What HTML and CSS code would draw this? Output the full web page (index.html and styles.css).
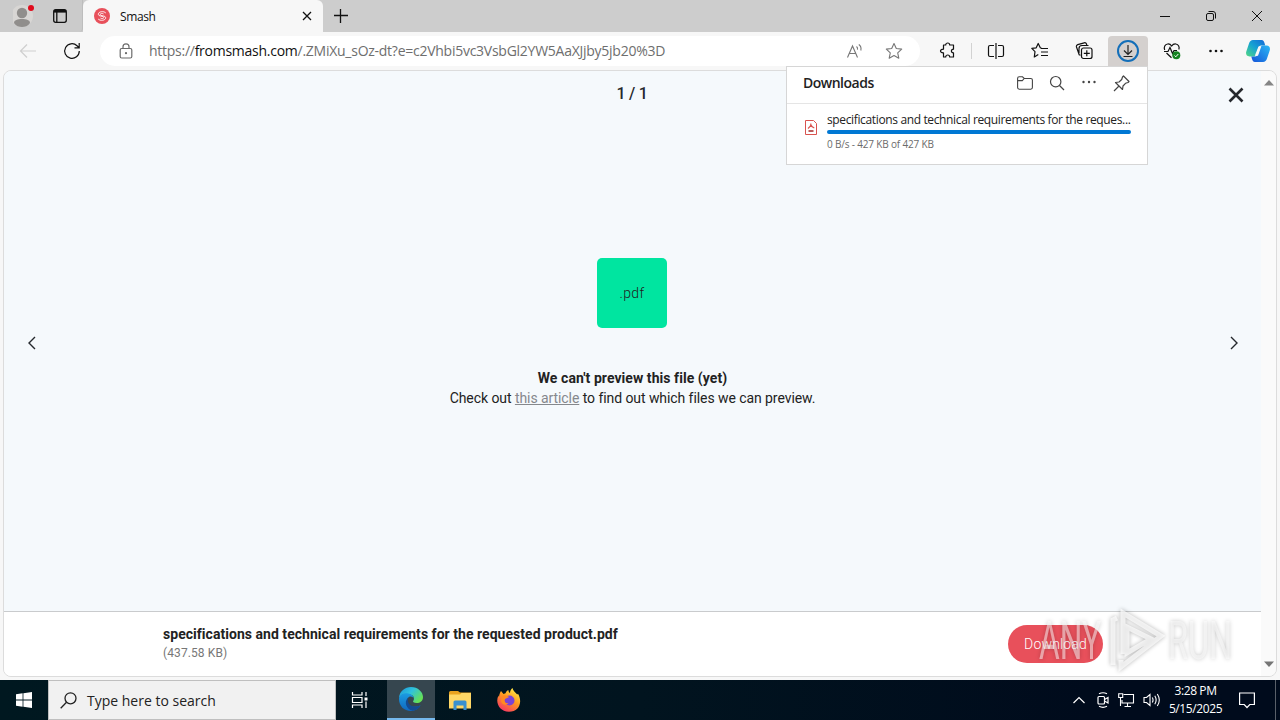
FILE: index.html
```html
<!DOCTYPE html>
<html lang="en">
<head>
  <meta charset="UTF-8">
  <title>Smash</title>
  <link rel="stylesheet" href="styles.css">
</head>
<body>
  <div class="desktop">

    <!-- Tabs -->
    <div class="tab-bar">
      <div class="tab-tools">
        <svg class="profile" width="22" height="26" viewBox="0 0 22 26">
          <circle cx="9" cy="13" r="11" fill="#d8d6d4"/>
          <circle cx="9" cy="10" r="5.2" fill="#908e8c"/>
          <path d="M1 20c0-3 3.500-4 8-4s8 1 8 4c-2 3-5 4-8 4s-6-1-8-4z" fill="#908e8c"/>
          <circle cx="18" cy="5" r="3" fill="#e00b1c"/>
        </svg>
        <svg class="workspaces" width="16" height="16" viewBox="0 0 16 16" fill="none" stroke="#111" stroke-width="1.300">
          <rect x="1.700" y="1.700" width="12.600" height="12.600" rx="2"/>
          <path d="M2 3.300h12" stroke-width="2.600"/>
          <path d="M4.800 4v10"/>
        </svg>
      </div>
      <div class="tab">
        <svg width="16" height="16" viewBox="0 0 16 16">
          <circle cx="8" cy="8" r="8" fill="#e8505b"/>
          <path d="M11.800 5C10 2.800 4.300 3.300 4.300 6.300c0 2.500 5.400 1.200 5.400 3.200 0 1.300-2 1.400-3.200.6M4.200 11c1.800 2.200 7.500 1.700 7.500-1.300 0-2.500-5.400-1.200-5.400-3.200 0-1.300 2-1.400 3.200-.6" fill="none" stroke="#fff" stroke-width=".9"/>
        </svg>
        <span class="tab-title">Smash</span>
        <svg width="10" height="10" viewBox="0 0 10 10" stroke="#111" stroke-width="1.300"><path d="M1 1l8 8M9 1L1 9"/></svg>
      </div>
      <svg class="new-tab" width="14" height="14" viewBox="0 0 14 14" stroke="#111" stroke-width="1.300"><path d="M6.500 0v14M0 6.500h14"/></svg>
      <div class="window-controls">
        <svg width="12" height="12" viewBox="0 0 12 12" fill="none" stroke="#111"><path d="M1 6.500h10"/></svg>
        <svg width="12" height="12" viewBox="0 0 12 12" fill="none" stroke="#111"><rect x="1.500" y="3.500" width="7" height="7" rx="1.500"/><path d="M3.500 1.500H8a2.500 2.500 0 0 1 2.500 2.500v4.500"/></svg>
        <svg width="12" height="12" viewBox="0 0 12 12" fill="none" stroke="#111"><path d="M1 1l10 10M11 1L1 11"/></svg>
      </div>
    </div>

    <!-- Toolbar -->
    <div class="toolbar">
      <div class="nav-buttons">
        <svg width="18" height="16" viewBox="0 0 18 16" fill="none" stroke="#cfcfcf" stroke-width="1.200"><path d="M17 8H2M8 1.500L1.500 8 8 14.500"/></svg>
        <svg width="18" height="18" viewBox="0 0 18 18" fill="none" stroke="#111" stroke-width="1.200"><path d="M16.300 9A7.300 7.300 0 1 1 14 3.700L16 5.500M16.200 1v4.800h-4.700"/></svg>
      </div>
      <div class="address">
        <svg width="14" height="16" viewBox="0 0 14 16" fill="none" stroke="#6b6b6b" stroke-width="1.200"><rect x="1.200" y="5.500" width="11.600" height="9.500" rx="1.500"/><path d="M4 5.500V3.800a3 3 0 0 1 6 0v1.700"/><circle cx="7" cy="10.200" r=".5" fill="#6b6b6b"/></svg>
        <span class="url">https://<b>fromsmash.com</b>/.ZMiXu_sOz-dt?e=c2Vhbi5vc3VsbGl2YW5AaXJjby5jb20%3D</span>
        <svg width="18" height="16" viewBox="0 0 18 16" fill="none" stroke="#777" stroke-width="1.100"><path d="M2.500 14.500L7.500 3l5 11.500M4.300 10.500h6.500M11.500 3.500c1 .8 1.200 2 1 3.200M13.800 1.500c2 1.500 2.500 4 2 6"/></svg>
        <svg class="star" width="18" height="18" viewBox="0 0 18 18" fill="none" stroke="#777" stroke-width="1.100" stroke-linejoin="round"><path d="M9 1.500l2.300 5 5.400.6-4 3.700 1.100 5.400L9 13.500l-4.800 2.700 1.100-5.400-4-3.700 5.400-.6z"/></svg>
      </div>
      <div class="actions">
        <span class="tool"><svg width="18" height="18" viewBox="0 0 18 18" fill="none" stroke="#111" stroke-width="1.200" stroke-linejoin="round"><path d="M4.500 3h2.200a2 2 0 0 1 4 0h3.800v4.200c-2.800-.2-2.800 3.800 0 3.600V15h-3.800a2 2 0 0 0-4 0H4.500v-4.200c-4 .3-4-3.900 0-3.600z"/></svg></span>
        <span class="divider"></span>
        <span class="tool"><svg width="18" height="18" viewBox="0 0 18 18" fill="none" stroke="#111" stroke-width="1.200"><path d="M9 1v16M7 3.500H3A1.500 1.500 0 0 0 1.500 5v8A1.500 1.500 0 0 0 3 14.500h4M11 3.500h4A1.500 1.500 0 0 1 16.500 5v8a1.500 1.500 0 0 1-1.500 1.500h-4"/></svg></span>
        <span class="tool"><svg width="18" height="18" viewBox="0 0 18 18" fill="none" stroke="#111" stroke-width="1.200" stroke-linejoin="round"><path d="M10.500 6L9.300 5.800 7.200 1.500 5.200 5.800l-4.400.6 3.200 3.200L3.300 15l4-2.500M10 6.500h7M10 10h7M10 13.500h7"/></svg></span>
        <span class="tool"><svg width="18" height="18" viewBox="0 0 18 18" fill="none" stroke="#111" stroke-width="1.200"><path d="M5.500 13.200l-1.300-.4L1.500 5A2 2 0 0 1 2.700 2.600l6.500-1.800A2 2 0 0 1 11.500 2l.3 1M4 11V6.500A3 3 0 0 1 7 3.500h6.500"/><rect x="6.500" y="6" width="10.500" height="10.500" rx="2" fill="#f7f7f7"/><path d="M11.800 8.300v6M8.800 11.300h6"/></svg></span>
        <span class="tool active"><svg width="22" height="22" viewBox="0 0 22 22" fill="none"><circle cx="11" cy="11" r="10" stroke="#146fb9" stroke-width="2"/><path d="M11 5v9M7 10.500l4 4 4-4M6.500 16.500h9" stroke="#222" stroke-width="1.200"/></svg></span>
        <span class="tool"><svg width="18" height="18" viewBox="0 0 18 18" fill="none" stroke="#111" stroke-width="1.200"><path d="M1.700 8C.5 5 2 2.300 4.700 2 6.500 1.800 8 3 8.700 4 9.500 2.800 11 1.800 12.800 2c2.700.3 4 3 3 5.500M1 9.500h4l2-4 2.500 6 1.500-3h3M3.500 11l5 4.700"/><circle cx="13.300" cy="13.300" r="4" fill="#168321" stroke="none"/><path d="M11.500 13.500l1.300 1.300 2.500-2.800" stroke="#fff" stroke-width="1"/></svg></span>
        <span class="tool"><svg width="16" height="4" viewBox="0 0 16 4" fill="#111"><circle cx="2.500" cy="2" r="1.300"/><circle cx="8" cy="2" r="1.300"/><circle cx="13.500" cy="2" r="1.300"/></svg></span>
        <span class="tool copilot"><svg width="24" height="22" viewBox="0 0 24 22">
          <defs>
            <linearGradient id="copilotLeft" x1="1" y1="0" x2="0" y2="1"><stop offset="0" stop-color="#1468d8"/><stop offset=".5" stop-color="#16a3d2"/><stop offset="1" stop-color="#52d883"/></linearGradient>
            <linearGradient id="copilotRight" x1="1" y1="0" x2="0" y2="1"><stop offset="0" stop-color="#2ab8f5"/><stop offset="1" stop-color="#1554d8"/></linearGradient>
          </defs>
          <path d="M7 0h8.500c2 0 2.500 1.500 3 3l.7 2.500h-4c-1.700 0-2.500 1-3 2.500l-2 6C9.700 16 9 16.500 7.500 16.500H3.500C.5 16.500-.5 14 .3 11.500L3 3.500C3.700 1.300 5 0 7 0z" fill="url(#copilotLeft)"/>
          <path d="M17 22H9c-2 0-2.500-1.500-3-3l-.7-2.500H9c1.700 0 2.500-1 3-2.500l2-6c.5-1.500 1.500-2.500 3-2.500h3.500c3 0 4 2.500 3.200 5L21 18.500c-.7 2.200-2 3.500-4 3.500z" fill="url(#copilotRight)"/>
          <path d="M12.500 6.500h2.800L12 15.800H8.800z" fill="#f7f7f7"/>
        </svg></span>
      </div>
    </div>

    <!-- Page -->
    <div class="page">
      <div class="viewer">
        <div class="preview">
          <div class="preview-top">
            <span class="counter">1 / 1</span>
            <svg class="close" width="16" height="16" viewBox="0 0 16 16" stroke="#25282d" stroke-width="2.600"><path d="M1.500 1.500l13 13M14.500 1.500l-13 13"/></svg>
          </div>
          <div class="preview-body">
            <svg width="10" height="14" viewBox="0 0 10 14" fill="none" stroke="#25282d" stroke-width="1.400"><path d="M8 1L2 7l6 6"/></svg>
            <div class="message">
              <div class="file-type">.pdf</div>
              <p class="message-title">We can't preview this file (yet)</p>
              <p class="message-text">Check out <a href="#">this article</a> to find out which files we can preview.</p>
            </div>
            <svg width="10" height="14" viewBox="0 0 10 14" fill="none" stroke="#25282d" stroke-width="1.400"><path d="M2 1l6 6-6 6"/></svg>
          </div>
        </div>
        <div class="file-bar">
          <div>
            <div class="file-name">specifications and technical requirements for the requested product.pdf</div>
            <div class="file-size">(437.58 KB)</div>
          </div>
          <button class="download-btn">Download</button>
        </div>
      </div>
      <div class="scrollbar">
        <svg width="10" height="6" viewBox="0 0 10 6"><path d="M0 5.500L5 0l5 5.500z" fill="#858585"/></svg>
        <svg width="10" height="6" viewBox="0 0 10 6"><path d="M0 .5L5 6l5-5.500z" fill="#757575"/></svg>
      </div>
    </div>

    <!-- Taskbar -->
    <div class="taskbar">
      <div class="start">
        <svg width="16" height="16" viewBox="0 0 16 16" fill="#fff"><path d="M0 2.200l6.600-.9v6.300H0zM7.400 1.200L16 0v7.600H7.400zM0 8.400h6.600v6.300L0 13.800zM7.400 8.400H16V16l-8.600-1.200z"/></svg>
      </div>
      <div class="search">
        <svg width="17" height="17" viewBox="0 0 17 17" fill="none" stroke="#222" stroke-width="1.300"><circle cx="10.500" cy="6.300" r="5.500"/><path d="M6.500 10.300L.7 16.200"/></svg>
        <span>Type here to search</span>
      </div>
      <div class="task task-view">
        <svg width="18" height="18" viewBox="0 0 18 18" fill="none" stroke="#fff" stroke-width="1.200"><path d="M1.500 1v3h9.500V1M1.500 17v-3h9.500v3M1.500 6.500H11v5H1.500zM15 1v4M15 10.500V17"/><path d="M13.500 6.500h3v3h-3z" fill="#fff" stroke="none"/></svg>
      </div>
      <div class="task open">
        <svg width="24" height="24" viewBox="0 0 24 24">
          <defs>
            <linearGradient id="edgeTop" x1="0" y1="0" x2="1" y2=".6"><stop offset="0" stop-color="#1b93d8"/><stop offset=".5" stop-color="#2fc2de"/><stop offset="1" stop-color="#66e155"/></linearGradient>
            <linearGradient id="edgeLow" x1="0" y1="0" x2="0" y2="1"><stop offset="0" stop-color="#1b9ce2"/><stop offset="1" stop-color="#1067be"/></linearGradient>
          </defs>
          <path d="M0 11C.5 4 6 0 12 0c7 0 12 5 12 10 0 4-3 6-6.300 6-3 0-4.200-1.200-3.500-2 1.600-2 1-6.500-4.200-6.500C5 6 1.500 8 0 11z" fill="url(#edgeTop)"/>
          <path d="M0 12C0 8 4 5.800 8 6.200c3.500.2 6.500 2.300 6.700 5.300-.5-1.200-1.700-2-3-2C9 9.500 8 12 8 14c0 5 6 7.500 13.500 4.500C19 22.500 15 24 12 24 5 24 0 19 0 12z" fill="url(#edgeLow)"/>
          <path d="M9 10.800c-4.500 4-1.500 11.700 4.500 13 3.500-.3 6.500-2.300 8-5.300C14 21.500 7.500 18 9 10.800z" fill="#144a91"/>
        </svg>
      </div>
      <div class="task">
        <svg width="22" height="20" viewBox="0 0 22 20"><path d="M0 2.500Q0 1 1.500 1H9l2 1.500h11V18H0z" fill="#e9a21f"/><path d="M0 4.500h11l1.500-1.500H22v15.500H0z" fill="#ffd766"/><path d="M4.500 12q0-1.500 1.500-1.500h10q1.500 0 1.500 1.500v8h-3v-4.500h-7V20h-3z" fill="#3990cf"/></svg>
      </div>
      <div class="task">
        <svg width="24" height="24" viewBox="0 0 24 24">
          <defs>
            <linearGradient id="fox" x1=".8" y1="0" x2=".2" y2="1"><stop offset="0" stop-color="#fff04a"/><stop offset=".45" stop-color="#ff9a1f"/><stop offset="1" stop-color="#f62f68"/></linearGradient>
          </defs>
          <path d="M4 3l2.500 3 2-.8C9 3.700 10 2.500 11.500 2c-.2 1.300.3 2.200 1.500 3C13 3 14 1 15.500 0c.3 2.800 3 4.200 4.700 6.500L21 5.700c5 8.500 1 18-9 18S-2 14 1.500 7.500L2 9c.2-2.500 1-4.500 2-6z" fill="url(#fox)"/>
          <circle cx="12.500" cy="12.500" r="5" fill="#7a43d6"/>
          <path d="M5 8c3-1.500 5 0 7 1-1.500 1.500-4.500 1-4.500 3.500 0 2 2 3 4 2.500-2 3-7 2-7.500-2z" fill="#ff8a20"/>
        </svg>
      </div>
      <div class="tray">
        <svg width="12" height="8" viewBox="0 0 12 8" fill="none" stroke="#fff" stroke-width="1.200"><path d="M.5 7L6 1.500 11.500 7"/></svg>
        <svg width="14" height="16" viewBox="0 0 14 16" fill="none" stroke="#fff" stroke-width="1.200"><rect x="2" y="4.500" width="6.500" height="7.500" rx="1"/><path d="M8.500 7.500L12 5.500v5.500L8.500 9M3 1.800Q7-.3 11 1.800M3 14.300Q7 16.300 11 14.300"/></svg>
        <svg width="17" height="16" viewBox="0 0 17 16" fill="none" stroke="#fff" stroke-width="1.100"><path d="M5.500 2.500h10v8.500H4V8M9.500 11v3M6.500 14.500h6.500M2.500 6v8"/><path d="M.7 1.700h4v3.800h-4z"/></svg>
        <svg width="18" height="16" viewBox="0 0 18 16" fill="none" stroke="#fff" stroke-width="1.100"><path d="M1 5.500h2.500l3.500-3v11l-3.500-3H1zM9.300 5.500q1.500 2.500 0 5M11.800 3.700q2.700 4.300 0 8.600M14.300 2q4 6 0 12"/></svg>
      </div>
      <div class="clock">
        <span>3:28 PM</span>
        <span>5/15/2025</span>
      </div>
      <svg class="notify" width="16" height="17" viewBox="0 0 16 17" fill="none" stroke="#fff" stroke-width="1.200"><path d="M.6 1h14.800v11.500h-4.600L8 15.500l-2.800-3H.6z"/></svg>
      <div class="show-desktop"></div>
    </div>

    <!-- Downloads popup -->
    <div class="downloads">
      <div class="downloads-head">
        <span class="downloads-title">Downloads</span>
        <svg width="16" height="14" viewBox="0 0 16 14" fill="none" stroke="#444" stroke-width="1.100"><path d="M.6 2.500Q.6.800 2.200.8h3.300L7.200 2.500h6.600q1.600 0 1.600 1.600v7.500q0 1.600-1.600 1.600H2.200Q.6 13.200.6 11.600zM.6 4.600h4.700l1.900-2.100"/></svg>
        <svg width="16" height="16" viewBox="0 0 16 16" fill="none" stroke="#444" stroke-width="1.200"><circle cx="6.700" cy="6.700" r="5.200"/><path d="M10.500 10.500l4.500 4.500"/></svg>
        <svg width="16" height="16" viewBox="0 0 16 16" fill="#444"><circle cx="2.500" cy="7" r="1.200"/><circle cx="8" cy="7" r="1.200"/><circle cx="13.500" cy="7" r="1.200"/></svg>
        <svg width="17" height="17" viewBox="0 0 17 17" fill="none" stroke="#444" stroke-width="1.200" stroke-linejoin="round"><path d="M10.500 1l5.500 5.500-1 1-2.500.8L10 11l-.5 3.500L2.500 7.500 6 7l2.700-2.500L9.500 2zM6 11L1 16"/></svg>
      </div>
      <div class="downloads-item">
        <svg width="12" height="15" viewBox="0 0 12 15" fill="none" stroke="#d9534f"><path d="M.5.500h8l3 3v11H.5z"/><path d="M5.800 3.500v3.500M3 8.500q2.300-2 3-3.500.8 2 3.300 3" stroke-width="1.200"/><path d="M3.500 11h5" stroke="#a33" stroke-width="1.600"/></svg>
        <div class="downloads-info">
          <div class="downloads-name">specifications and technical requirements for the reques...</div>
          <div class="progress"></div>
          <div class="downloads-status">0 B/s - 427 KB of 427 KB</div>
        </div>
      </div>
    </div>

    <svg class="watermark" width="220" height="72" viewBox="0 0 220 72">
      <text x="2" y="51" textLength="62" lengthAdjust="spacingAndGlyphs">ANY</text>
      <path class="mark" d="M76 57V12l4-2M86 46V5l38 23-40 31v-7M90 19l24 12-24 14z"/>
      <text x="131" y="51" textLength="64" lengthAdjust="spacingAndGlyphs">RUN</text>
    </svg>
  </div>
</body>
</html>
```

FILE: styles.css
```css
* {
  box-sizing: border-box;
}

body {
  margin: 0;
  font-family: "Open Sans", "Noto Sans", sans-serif;
  color: #222;
}

svg {
  display: block;
  flex-shrink: 0;
}

.desktop {
  position: relative;
  width: 1280px;
  height: 720px;
  display: flex;
  flex-direction: column;
  background: #f7f7f7;
  overflow: hidden;
}

/* Tabs */
.tab-bar {
  height: 32px;
  display: flex;
  align-items: center;
  background: #cdcdcd;
}

.tab-tools {
  width: 83px;
  height: 32px;
  display: flex;
  align-items: center;
  gap: 17px;
  padding-left: 13px;
  background: #cbcbcb;
  border-right: 1px solid #bdbdbd;
  border-radius: 0 0 4px 0;
}

.tab {
  width: 240px;
  height: 32px;
  display: flex;
  align-items: center;
  padding: 0 11px 0 11px;
  background: #f7f7f7;
  border-radius: 6px 6px 0 0;
}

.tab-title {
  flex: 1;
  margin-left: 10px;
  font-size: 12px;
  letter-spacing: -0.4px;
  color: #111;
}

.new-tab {
  margin-left: 11px;
}

.window-controls {
  display: flex;
  gap: 34px;
  margin-left: auto;
  padding-right: 17px;
}

/* Toolbar */
.toolbar {
  height: 38px;
  display: flex;
  padding-top: 4px;
}

.nav-buttons {
  width: 100px;
  height: 30px;
  display: flex;
  flex-shrink: 0;
  align-items: center;
  gap: 26px;
  padding-left: 19px;
}

.address {
  width: 820px;
  height: 30px;
  display: flex;
  flex-shrink: 0;
  align-items: center;
  padding: 0 17px 0 19px;
  background: #fff;
  border-radius: 15px;
}

.url {
  flex: 1;
  margin-left: 16px;
  padding-bottom: 1px;
  font-size: 14px;
  letter-spacing: -0.26px;
  color: #6e6e6e;
  white-space: nowrap;
}

.url b {
  font-weight: normal;
  color: #111;
}

.star {
  margin-left: 22px;
}

.actions {
  display: flex;
  flex-shrink: 0;
  align-items: center;
  height: 30px;
  padding-left: 8px;
}

.tool {
  width: 40px;
  height: 30px;
  margin-right: 4px;
  display: flex;
  align-items: center;
  justify-content: center;
}

.tool.active {
  background: #d4d0ce;
  border-radius: 4px 4px 0 0;
}

.tool.copilot {
  margin: 0;
  width: 36px;
}

.divider {
  width: 1px;
  height: 16px;
  margin: 0 4px 0 -1px;
  background: #d2d2d2;
}

/* Page */
.page {
  width: 1274px;
  height: 607px;
  margin-left: 3px;
  display: flex;
  border: 1px solid #dcdcdc;
  border-radius: 8px;
  overflow: hidden;
  font-family: Roboto, sans-serif;
}

.viewer {
  width: 1257px;
  display: flex;
  flex-direction: column;
}

.preview {
  height: 541px;
  display: flex;
  flex-direction: column;
  background: #f5f9fc;
  border-bottom: 1px solid #c9cbcd;
}

.preview-top {
  display: grid;
  grid-template-columns: 1fr auto 1fr;
  align-items: center;
  height: 48px;
  padding: 0 17px 0 16px;
}

.counter {
  grid-column: 2;
  padding-bottom: 3px;
  font-size: 16px;
  font-weight: 500;
  letter-spacing: -0.3px;
  color: #25282d;
}

.close {
  justify-self: end;
}

.preview-body {
  height: 448px;
  display: flex;
  justify-content: space-between;
  align-items: center;
  padding: 0 22px 0 23px;
}

.message {
  display: flex;
  flex-direction: column;
  align-items: center;
  padding: 0 1px 20px 0;
  font-size: 14px;
  line-height: 20px;
}

.file-type {
  width: 70px;
  height: 70px;
  margin: 0 1px 40px 0;
  border-radius: 5px;
  background: #00e5a0;
  text-align: center;
  line-height: 70px;
  font-weight: 300;
  letter-spacing: 0.3px;
}

.message p {
  margin: 0;
}

.message-title {
  font-weight: bold;
  letter-spacing: 0.06px;
}

.message-text {
  letter-spacing: -0.07px;
}

.message a {
  color: #85888c;
}

.file-bar {
  flex: 1;
  display: flex;
  align-items: center;
  justify-content: space-between;
  padding: 0 158px 0 159px;
  background: #fff;
}

.file-name {
  font-size: 14px;
  font-weight: bold;
  line-height: 17px;
  letter-spacing: 0.035px;
}

.file-size {
  padding-top: 1px;
  font-size: 12px;
  line-height: 18px;
  letter-spacing: 0.1px;
  color: #777;
}

.download-btn {
  width: 95px;
  height: 38px;
  padding: 0;
  border: none;
  border-radius: 19px;
  background: #e8505b;
  color: #fff;
  font-family: inherit;
  font-size: 14px;
  font-weight: 300;
  letter-spacing: 0.15px;
}

.scrollbar {
  width: 15px;
  display: flex;
  flex-direction: column;
  justify-content: space-between;
  align-items: center;
  padding: 9px 0;
  background: #fafafa;
}

/* Taskbar */
.taskbar {
  height: 40px;
  margin-top: 3px;
  display: flex;
  align-items: center;
  background: linear-gradient(90deg, #001820, #01141f 50%, #000b1c 85%);
}

.start {
  width: 48px;
  display: flex;
  justify-content: center;
}

.search {
  width: 288px;
  height: 40px;
  display: flex;
  align-items: center;
  gap: 10px;
  padding-left: 11px;
  background: #f1f1f1;
  border: 1px solid #bfbfbf;
  font-size: 14px;
}

.task {
  width: 49px;
  height: 40px;
  display: flex;
  align-items: center;
  justify-content: center;
}

.task-view {
  width: 48px;
  margin-right: 3px;
}

.task.open {
  width: 48px;
  background: #36464f;
  border-bottom: 2px solid #76b9ed;
}

.tray {
  display: flex;
  align-items: center;
  gap: 8px;
  margin-left: auto;
}

.tray svg:first-child {
  margin-right: 3px;
}

.clock {
  width: 69px;
  display: flex;
  flex-direction: column;
  align-items: center;
  font-size: 12px;
  line-height: 18px;
  letter-spacing: -0.4px;
  color: #fff;
}

.notify {
  margin: 0 20px 0 9px;
}

.show-desktop {
  width: 5px;
  height: 40px;
  border-left: 1px solid #596069;
}

/* Downloads popup */
.downloads {
  position: absolute;
  left: 786px;
  top: 66px;
  width: 362px;
  height: 99px;
  background: #fff;
  border: 1px solid #d6d6d6;
}

.downloads-head {
  height: 37px;
  display: flex;
  align-items: center;
  gap: 16px;
  padding: 0 17px 4px 16px;
  border-bottom: 1px solid #e5e5e5;
}

.downloads-title {
  flex: 1;
  padding-bottom: 1px;
  font-size: 14px;
  font-weight: 600;
  letter-spacing: -0.5px;
}

.downloads-item {
  display: flex;
  padding: 7px 16px 0 18px;
}

.downloads-item svg {
  margin-top: 9px;
}

.downloads-info {
  flex: 1;
  min-width: 0;
  margin-left: 10px;
}

.downloads-name {
  font-size: 12px;
  line-height: 18px;
  letter-spacing: -0.36px;
  white-space: nowrap;
}

.progress {
  height: 4px;
  margin-top: 1px;
  border-radius: 2px;
  background: #0078d4;
}

.downloads-status {
  margin-top: 4px;
  font-size: 10px;
  line-height: 13px;
  letter-spacing: -0.17px;
  color: #6b6b6b;
}

.watermark {
  position: absolute;
  left: 1037px;
  top: 608px;
  overflow: visible;
  fill: rgba(255, 255, 255, 0.5);
  font-family: Roboto, sans-serif;
  font-size: 53px;
  filter: drop-shadow(0 0 2px rgba(0, 0, 0, 0.4));
}

.mark {
  fill: none;
  stroke: rgba(255, 255, 255, 0.7);
  stroke-width: 5;
}
```
